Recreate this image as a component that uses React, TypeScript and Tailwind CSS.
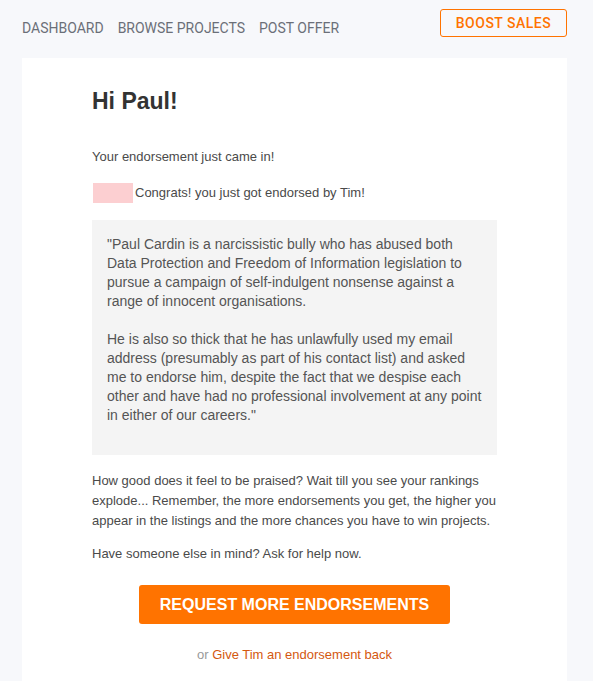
export default function App() {
  return (
    <div className="min-h-screen w-full bg-[#f7f8fb] font-['Liberation_Sans',Arial,sans-serif]">
      {/* Top nav */}
      <div className="flex h-[58px] items-start justify-between pl-[22px] pr-[26px] pt-[9px]">
        <nav className="flex items-center gap-[14px] pt-[9px] font-['Roboto',sans-serif] text-[14px] text-[#6b6f78]">
          <a href="#">DASHBOARD</a>
          <a href="#">BROWSE PROJECTS</a>
          <a href="#">POST OFFER</a>
        </nav>
        <button className="h-[28px] w-[127px] rounded-[3px] border border-[#ff7300] font-['Roboto',sans-serif] text-[14px] font-medium tracking-[0.5px] text-[#ff7300]">
          BOOST SALES
        </button>
      </div>

      {/* Card */}
      <div className="ml-[22px] mr-[26px] bg-white pb-[16px]">
        <div className="mx-auto w-[405px] pt-[28px] text-[13px] text-[#4a4a4a]">
          <h1 className="text-[23px] font-bold leading-[30px] text-[#333]">
            Hi Paul!
          </h1>

          <p className="mt-[32px] leading-[18px]">Your endorsement just came in!</p>

          <div className="mt-[17px] flex items-center gap-[2px] pl-[1px]">
            <span className="inline-block h-[20px] w-[40px] bg-[#fccfd1]" />
            <span>Congrats! you just got endorsed by Tim!</span>
          </div>

          <div className="mt-[17px] bg-[#f4f4f4] px-[15px] pb-[30px] pt-[15px] text-[14px] leading-[19px] text-[#555]">
            <p>
              "Paul Cardin is a narcissistic bully who has abused both Data
              Protection and Freedom of Information legislation to pursue a
              campaign of self-indulgent nonsense against a range of innocent
              organisations.
            </p>
            <p className="mt-[19px]">
              He is also so thick that he has unlawfully used my email address
              (presumably as part of his contact list) and asked me to endorse
              him, despite the fact that we despise each other and have had no
              professional involvement at any point in either of our careers."
            </p>
          </div>

          <p className="mt-[16px] leading-[20px]">
            How good does it feel to be praised? Wait till you see your rankings
            explode... Remember, the more endorsements you get, the higher you
            appear in the listings and the more chances you have to win
            projects.
          </p>

          <p className="mt-[13px] leading-[20px]">
            Have someone else in mind? Ask for help now.
          </p>

          <div className="mt-[21px] flex justify-center">
            <button className="h-[39px] w-[311px] rounded-[3px] bg-[#ff7300] text-[16px] font-bold text-white">
              REQUEST MORE ENDORSEMENTS
            </button>
          </div>

          <p className="mt-[21px] text-center leading-[20px] text-[#999]">
            or{" "}
            <a href="#" className="text-[#d4580f]">
              Give Tim an endorsement back
            </a>
          </p>
        </div>
      </div>
    </div>
  );
}
